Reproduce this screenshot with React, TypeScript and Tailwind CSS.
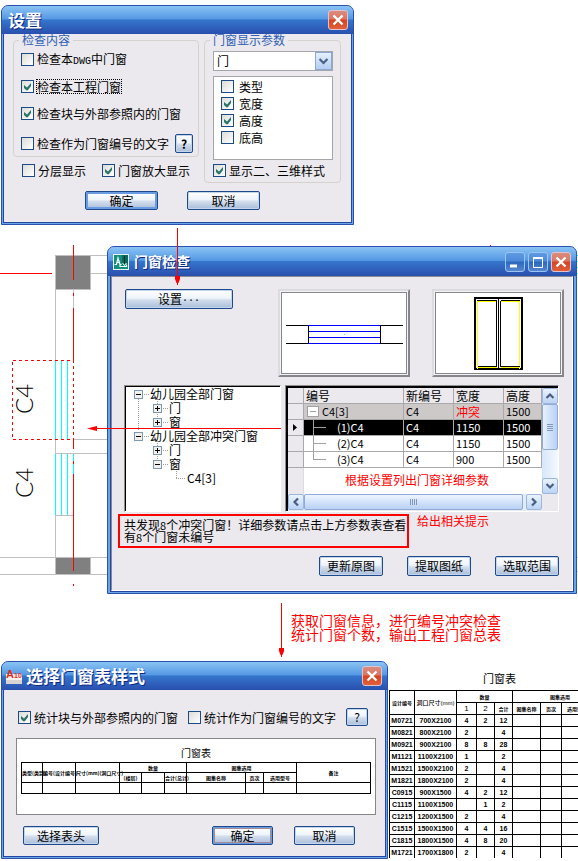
import React from 'react';
import clsx from 'clsx';

type CheckProps = {
  label: React.ReactNode;
  checked?: boolean;
  focused?: boolean;
  gap?: string;
};

function Check({ label, checked = false, focused = false, gap = 'gap-[3px]' }: CheckProps) {
  return (
    <label className={clsx('flex items-center h-[13px] leading-[13px] whitespace-nowrap', gap)}>
      <span className="grid w-[13px] h-[13px] shrink-0">
        <input
          type="checkbox"
          defaultChecked={checked}
          className="peer appearance-none [grid-area:1/1] w-[13px] h-[13px] border border-[#1c4a86] bg-linear-to-br from-[#dcdcd7] to-white"
        />
        <svg viewBox="0 0 13 13" className="[grid-area:1/1] hidden peer-checked:block pointer-events-none" fill="#2b7468">
          <path d="M3 5v3l2 2 1 .5 1-.5 3-4V3L6 7.500z" />
        </svg>
      </span>
      <span className={clsx(focused && 'outline-1 outline-dotted outline-black')}>{label}</span>
    </label>
  );
}

type ButtonProps = { children: React.ReactNode; className?: string; active?: boolean };

function Button({ children, className, active = false }: ButtonProps) {
  return (
    <button
      type="button"
      className={clsx(
        'shrink-0 flex items-center justify-center border rounded-[2px] leading-none text-black whitespace-nowrap',
        'bg-[linear-gradient(#ffffff,#eef4fb_45%,#d3deec_55%,#a9bddb)]',
        active
          ? 'border-[#1d4a8c] shadow-[inset_0_0_0_2px_#6b9be0]'
          : 'border-[#1d4a8c] shadow-[inset_0_0_0_1px_#c4d4ea]',
        className,
      )}
    >
      {children}
    </button>
  );
}

function CaptionButton({ kind }: { kind: 'min' | 'max' | 'close' }) {
  return (
    <button
      type="button"
      aria-label={kind}
      className={clsx(
        'w-5 h-5 shrink-0 rounded-[3px] border grid place-items-center',
        kind === 'close'
          ? 'border-[#e3c3cb] bg-[linear-gradient(#d98c80,#dd7562_45%,#d8421f_50%,#e0603a)]'
          : 'border-[#9cc4f2] bg-[linear-gradient(#5f9be2,#4c88d8_45%,#2c66bc_50%,#5687cf)]',
      )}
    >
      <svg width="14" height="14" viewBox="0 0 14 14" fill="none" stroke="white">
        {kind === 'min' && <path d="M2 11h7" strokeWidth="3" />}
        {kind === 'max' && <path d="M2.500 3v9.500h9V3M2 3.500h10M2 2.500h10" />}
        {kind === 'close' && <path d="M2.500 2.500l9 9M11.500 2.500l-9 9" strokeWidth="2.400" />}
      </svg>
    </button>
  );
}

type DialogProps = {
  title: string;
  icon?: React.ReactNode;
  small?: boolean;
  resizable?: boolean;
  className?: string;
  children: React.ReactNode;
};

function Dialog({ title, icon, small = false, resizable = false, className, children }: DialogProps) {
  return (
    <section className={clsx('rounded-t-[7px] border border-[#2a50b0] bg-[#6aa5e8] overflow-hidden', className)}>
      <header
        className={clsx(
          'flex items-center bg-[linear-gradient(#8ac4f4,#5598e4_46%,#3575cc_50%,#2a4fae)]',
          small ? 'h-[29px] pl-[5px] pr-[5px] gap-[5px]' : 'h-7 pr-[5px] gap-1',
          !small && (icon ? 'pl-1' : 'pl-[6px]'),
        )}
      >
        {icon}
        <h2
          className={clsx(
            'flex-1 font-bold text-white whitespace-nowrap [text-shadow:1px_1px_0_#0f2a80]',
            small ? 'text-[14px]' : 'text-[17px]',
          )}
        >
          {title}
        </h2>
        <div className="flex gap-[3px]">
          {resizable && <CaptionButton kind="min" />}
          {resizable && <CaptionButton kind="max" />}
          <CaptionButton kind="close" />
        </div>
      </header>
      <div className={clsx('pb-px', small ? 'px-[2px]' : 'px-px')}>
        <div className="border-x border-b border-[#2348a4] bg-[#ebe9ed]">{children}</div>
      </div>
    </section>
  );
}

function SettingsDialog() {
  return (
    <Dialog title="设置" className="max-w-[353px]">
      <div className="pl-[9px] pr-[10px] pb-3">
        <div className="grid grid-cols-[186fr_137fr] gap-[5px]">
          <div>
            <fieldset className="border border-[#d3d2cc] rounded-[4px] pl-[7px] pb-[3px]">
              <legend className="px-[3px] -ml-[2px] h-3 leading-3 text-[#2f5fb3]">检查内容</legend>
              <div className="flex flex-col gap-[14px] pt-[7px]">
                <Check label={<>检查本<span className="font-['Liberation_Mono'] text-[10px]">DWG</span>中门窗</>} />
                <Check label="检查本工程门窗" checked focused />
                <Check label="检查块与外部参照内的门窗" checked />
                <div className="flex items-center gap-[6px]">
                  <Check label="检查作为门窗编号的文字" />
                  <Button className="w-[18px] h-[19px] font-bold">?</Button>
                </div>
              </div>
            </fieldset>
            <div className="flex gap-4 pl-[9px] pt-[7px]">
              <Check label="分层显示" />
              <Check label="门窗放大显示" checked />
            </div>
          </div>
          <fieldset className="border border-[#d3d2cc] rounded-[4px] pl-2 pr-[7px]">
            <legend className="px-[3px] -ml-[3px] h-3 leading-3 text-[#2f5fb3]">门窗显示参数</legend>
            <div className="grid mt-[5px]">
              <select
                aria-label="门窗显示参数"
                className="[grid-area:1/1] appearance-none h-5 w-full pl-[3px] leading-[18px] border border-[#a5a5ab] bg-white text-black"
              >
                <option>门</option>
                <option>窗</option>
              </select>
              <span className="[grid-area:1/1] justify-self-end m-px w-[17px] h-[18px] border border-[#8aa8d2] bg-linear-to-b from-[#e6f0fd] to-[#b4cdf1] grid place-items-center pointer-events-none">
                <svg width="9" height="7" viewBox="0 0 9 7" fill="none" stroke="#49608c" strokeWidth="2.200">
                  <path d="M.5 1l4 4 4-4" />
                </svg>
              </span>
            </div>
            <div className="mt-[5px] h-[84px] border border-[#a5a5ab] bg-white flex flex-col gap-1 pl-[7px] pt-[3px]">
              <Check label="类型" gap="gap-[5px]" />
              <Check label="宽度" gap="gap-[5px]" checked />
              <Check label="高度" gap="gap-[5px]" checked />
              <Check label="底高" gap="gap-[5px]" />
            </div>
            <div className="pt-1 pb-[5px]">
              <Check label="显示二、三维样式" checked />
            </div>
          </fieldset>
        </div>
        <div className="flex gap-[29px] pl-[72px] pt-2">
          <Button active className="w-[73px] h-[19px]">确定</Button>
          <Button className="w-[73px] h-[19px]">取消</Button>
        </div>
      </div>
    </Dialog>
  );
}

function FloorPlan() {
  return (
    <svg width="578" height="369" viewBox="0 225 578 369" fill="none" className="absolute left-0 top-0" shapeRendering="crispEdges">
      {/* walls */}
      <path
        stroke="#c0c0c0"
        d="M55.500 290v267M73.500 290v70M90 255.500h20M90 273.500h20M73 439.500h37M55 453.500h55M55 515.500h18M0 557.500h110M0 574.500h110M577 557.500h1M577 571.500h1"
      />
      <rect x="55.500" y="255.500" width="35" height="34" fill="#808080" stroke="#c0c0c0" />
      <rect x="55.500" y="557.500" width="35" height="17" fill="#808080" stroke="#c0c0c0" />
      {/* windows */}
      <path
        stroke="#00ffff"
        d="M55.500 361v78M61.500 361v78M67.500 361v78M55.500 454v61M61.500 454v61M67.500 454v61M73.500 454v20M577 255.500h1M577 261.500h1M577 267.500h1M577 273.500h1"
      />
      {/* axes */}
      <path stroke="#ff0000" d="M0 273.500h52M73.500 245v35M73.500 293v3M73.500 308v52M73.500 440v9M73.500 461v3M73.500 474v97M73.500 584v2M490 245.500h1" />
      <rect x="12.500" y="360.500" width="61" height="79" stroke="#ff0000" strokeDasharray="3 3" />
      <g fill="black" fontFamily="Lato" fontWeight="300" fontSize="24">
        <text transform="translate(33 414) rotate(-90)">C4</text>
        <text transform="translate(33 498) rotate(-90)">C4</text>
      </g>
    </svg>
  );
}

function Preview({ children }: { children: React.ReactNode }) {
  return (
    <div className="w-[132px] h-[88px] border-2 border-t-[#dcdce0] border-l-[#dcdce0] border-r-[#85858c] border-b-[#85858c] bg-[#f4f4f6] p-px">
      <svg viewBox="0 0 126 82" className="w-full h-full bg-white outline-1 -outline-offset-1 outline-[#85858c]" fill="none" shapeRendering="crispEdges">
        {children}
      </svg>
    </div>
  );
}

type TreeRow = { label: string; level: number; open?: boolean };

const treeRows: TreeRow[] = [
  { label: '幼儿园全部门窗', level: 0, open: true },
  { label: '门', level: 1, open: false },
  { label: '窗', level: 1, open: false },
  { label: '幼儿园全部冲突门窗', level: 0, open: true },
  { label: '门', level: 1, open: false },
  { label: '窗', level: 1, open: true },
  { label: 'C4[3]', level: 2 },
];

const treeIndent = ['pl-2', 'pl-[27px]', 'pl-[50px]'];

function Tree() {
  return (
    <div className="w-[157px] h-[127px] shrink-0 border border-t-[#8f8f8f] border-l-[#8f8f8f] border-r-white border-b-white">
      <ul className="h-full relative border-t border-l border-black bg-white">
        <svg width="70" height="100" className="absolute left-0 top-0" fill="none" stroke="#a0a0a0" strokeDasharray="1 1" shapeRendering="crispEdges">
          <path d="M12.500 12v32M31.500 12v6M31.500 27v5M31.500 54v6M31.500 69v5M50.500 82v9M50 91.500h10" />
        </svg>
        {treeRows.map((row, i) => (
          <li key={i} className={clsx('relative flex items-center h-[14px] leading-[14px] whitespace-nowrap', treeIndent[row.level])}>
            {row.open !== undefined && (
              <svg width="16" height="9" viewBox="0 0 16 9" fill="none" shapeRendering="crispEdges">
                <rect x=".5" y=".5" width="8" height="8" rx="1" fill="#f1f0ea" stroke="#7b9ab8" />
                <path d={row.open ? 'M2 4.500h5' : 'M2 4.500h5M4.500 2v5'} stroke="black" />
                <path d="M10 4.500h5" stroke="#a0a0a0" strokeDasharray="1 1" />
              </svg>
            )}
            <span className={clsx(row.level === 2 && 'pl-[11px]')}>{row.label}</span>
          </li>
        ))}
      </ul>
    </div>
  );
}

type DoorRow = { name: string; code: string; width: string; height: string };

const doorRows: DoorRow[] = [
  { name: 'C4[3]', code: 'C4', width: '冲突', height: '1500' },
  { name: '(1)C4', code: 'C4', width: '1150', height: '1500' },
  { name: '(2)C4', code: 'C4', width: '1150', height: '1500' },
  { name: '(3)C4', code: 'C4', width: '900', height: '1500' },
];

const branch = ['M1 2.500h11v10H1zM4 7.500h6', 'M7.500 0v16M7 7.500h13', 'M7.500 0v16M7 7.500h13', 'M7.500 0v8M7 7.500h13'];

const scrollButton = 'w-4 h-4 shrink-0 border border-[#9cb6dc] rounded-[2px] bg-linear-to-b from-[#eaf3fe] to-[#bcd4f5] grid place-items-center';

function ScrollArrow({ label, d }: { label: string; d: string }) {
  return (
    <button type="button" aria-label={label} className={scrollButton}>
      <svg width="10" height="10" viewBox="0 0 10 10" fill="none" stroke="#4a5f80" strokeWidth="2.200">
        <path d={d} />
      </svg>
    </button>
  );
}

function DoorGrid() {
  const cell = 'border-r border-b border-[#a9a9a9] pl-[2px] h-4';
  return (
    <div className="flex-1 min-w-0 border border-t-[#8f8f8f] border-l-[#8f8f8f] border-r-white border-b-white">
      <div className="border-t-2 border-l-2 border-black bg-[#ebe9ed] grid grid-cols-[minmax(0,1fr)_16px] grid-rows-[106px_16px] pb-px">
        <div className="bg-white">
          <table className="table-fixed w-full border-separate border-spacing-0 text-[11px] leading-[15px] whitespace-nowrap">
            <colgroup>
              <col className="w-4" />
              <col />
              <col className="w-[50px]" />
              <col className="w-[50px]" />
              <col className="w-[38px]" />
            </colgroup>
            <thead>
              <tr className="text-left text-[12px] bg-[#ebe9ed]">
                <th className={cell}></th>
                <th className={clsx(cell, 'font-normal')}>编号</th>
                <th className={clsx(cell, 'font-normal')}>新编号</th>
                <th className={clsx(cell, 'font-normal')}>宽度</th>
                <th className={clsx(cell, 'font-normal')}>高度</th>
              </tr>
            </thead>
            <tbody>
              {doorRows.map((row, i) => (
                <tr key={row.name} className={clsx(i === 0 && 'bg-[#cdc9c9]', i === 1 && 'bg-black text-white')}>
                  <td className={clsx(cell, 'bg-[#ebe9ed] pl-[5px]')}>
                    {i === 1 && (
                      <svg width="5" height="7" viewBox="0 0 5 7" fill="black">
                        <path d="M0 0v7l4-3.500z" />
                      </svg>
                    )}
                  </td>
                  <td className={clsx(cell, 'py-0 pl-0')}>
                    <span className="flex">
                      <svg width={i === 0 ? 16 : 31} height="15" fill={i === 0 ? 'white' : 'none'} stroke="#a0a0a0" shapeRendering="crispEdges">
                        <path d={branch[i]} />
                      </svg>
                      {row.name}
                    </span>
                  </td>
                  <td className={cell}>{row.code}</td>
                  <td className={clsx(cell, i === 0 && 'text-[#ff0000] text-[12px]')}>{row.width}</td>
                  <td className={cell}>{row.height}</td>
                </tr>
              ))}
            </tbody>
          </table>
          <div className="flex h-[26px]">
            <div className="w-4 bg-[#ebe9ed] border-r border-[#dcdcdc]" />
            <p className="pl-[41px] pt-[5px] leading-[14px] text-[#ff0000] whitespace-nowrap">根据设置列出门窗详细参数</p>
          </div>
        </div>
        <div className="flex flex-col bg-linear-to-r from-[#d6e6fb] to-[#f4f9ff]">
          <ScrollArrow label="向上" d="M1.500 7L5 3.500 8.500 7" />
          <div className="w-4 h-[46px] border border-[#8fabd6] rounded-[2px] bg-linear-to-r from-[#e8f1fe] to-[#b9d1f4] grid place-items-center">
            <div className="w-[6px] h-[7px] bg-[repeating-linear-gradient(#7f97bd_0_1px,transparent_1px_2px)]" />
          </div>
          <div className="flex-1" />
          <ScrollArrow label="向下" d="M1.500 3L5 6.500 8.500 3" />
        </div>
        <div className="flex bg-[#e3eefc]">
          <ScrollArrow label="向左" d="M7 1.500L3.500 5 7 8.500" />
          <div className="flex-1 mr-[3px] border border-[#8fabd6] rounded-[2px] bg-linear-to-b from-[#eef5ff] to-[#b9d1f4] grid place-items-center">
            <div className="w-[7px] h-[6px] bg-[repeating-linear-gradient(90deg,#7f97bd_0_1px,transparent_1px_2px)]" />
          </div>
          <ScrollArrow label="向右" d="M3 1.500L6.500 5 3 8.500" />
        </div>
        <div />
      </div>
    </div>
  );
}

function CadIcon() {
  return (
    <svg width="16" height="16" viewBox="0 0 16 16" fill="none">
      <rect x=".5" y=".5" width="15" height="15" fill="#15907c" stroke="#e8f4f0" />
      <path d="M9 1h6v10H9z" fill="#0b6a5a" />
      <path d="M1.500 10.500h2L5 4l2 6.500h1.500M3.500 8.500h3M7 10.500v2h6.500v-2" stroke="white" strokeWidth="1.200" />
      <path d="M11.500 2v8" stroke="#06352d" />
      <path d="M9.500 9l2 2.500 2-2.500" stroke="white" />
    </svg>
  );
}

function CheckDialog() {
  return (
    <Dialog title="门窗检查" icon={<CadIcon />} small resizable>
      <div className="border border-t-[#8a8a90] border-l-[#8a8a90] border-r-white border-b-white pt-3 pb-[14px]">
        <div className="flex justify-between pl-[13px] pr-2">
          <Button className="w-[108px] h-5">设置<span className="font-['Liberation_Mono'] text-[10px]">...</span></Button>
          <div className="flex gap-[22px]">
            <Preview>
              <path d="M5 33.500h22M5 51.500h22M27.500 33v19M99.500 33v19M100 33.500h22M100 51.500h22" stroke="black" />
              <path d="M27 33.500h72M28 39.500h71M28 45.500h71M27 51.500h72" stroke="#0000ff" />
              <path d="M63 42.500h1" stroke="#00ffff" />
            </Preview>
            <Preview>
              <rect x="40" y="6" width="47" height="71" stroke="black" strokeWidth="2" />
              <path d="M42.500 9v68M84.500 9v68M42 9.500h20M66 9.500h19M42 75.500h20M66 75.500h19" stroke="#ffff00" />
              <path d="M42 8.500h20M66 8.500h19M43 74.500h19M66 74.500h19M61.500 9v66M63.500 6v71M65.500 9v66" stroke="black" />
            </Preview>
          </div>
        </div>
        <div className="flex gap-1 pl-3 pr-[13px] pt-2">
          <Tree />
          <DoorGrid />
        </div>
        <div className="flex pl-[6px] pt-[2px] gap-2">
          <p className="w-[291px] border-2 border-[#ff0000] pl-1 py-[3px] leading-3 text-black whitespace-nowrap">
            共发现<span className="text-[11px]">8</span>个冲突门窗！详细参数请点击上方参数表查看
            <br />有<span className="text-[11px]">8</span>个门窗未编号
          </p>
          <span className="leading-[14px] text-[#ff0000] whitespace-nowrap">给出相关提示</span>
        </div>
        <div className="flex justify-end gap-6 pr-[13px] pt-2">
          <Button className="w-16 h-5">更新原图</Button>
          <Button className="w-16 h-5">提取图纸</Button>
          <Button className="w-16 h-5">选取范围</Button>
        </div>
      </div>
    </Dialog>
  );
}

function HeaderIcon() {
  return (
    <svg width="16" height="18" viewBox="0 0 16 18">
      <path d="M0 7h16v10H0z" fill="#d9d4d2" />
      <path d="M0 7h16v6H0z" fill="#f6f1ef" />
      <g fill="#d8301c" fontFamily="Liberation Sans" fontWeight="700">
        <text x="0" y="11" fontSize="11">A</text>
        <text x="8" y="11" fontSize="7">10</text>
      </g>
    </svg>
  );
}

function TableStyleDialog() {
  const cell = 'border border-black p-0 text-center';
  return (
    <Dialog title="选择门窗表样式" icon={<HeaderIcon />} className="w-[387px] shrink-0">
      <div className="pl-3 pr-[9px] pt-[18px] pb-[11px]">
        <div className="flex items-center gap-[10px] pl-[2px]">
          <Check label="统计块与外部参照内的门窗" checked />
          <Check label="统计作为门窗编号的文字" />
          <Button className="w-[22px] h-[18px]">?</Button>
        </div>
        <div className="mt-3 h-[77px] border border-[#85858c] bg-white pt-[7px] px-1">
          <h3 className="text-center text-[10px] leading-[14px]">门窗表</h3>
          <table className="mt-[2px] w-full table-fixed border-collapse text-[5px] leading-[6px] font-bold whitespace-nowrap">
            <colgroup>
              <col className="w-[21px]" />
              <col className="w-[33px]" />
              <col className="w-[44px]" />
              <col className="w-[22px]" />
              <col className="w-[23px]" />
              <col className="w-[22px]" />
              <col className="w-[59px]" />
              <col className="w-[18px]" />
              <col className="w-[33px]" />
              <col />
            </colgroup>
            <thead>
              <tr className="h-[10px]">
                <th className={cell} rowSpan={2}>类型(类别)</th>
                <th className={cell} rowSpan={2}>编号(设计编号)</th>
                <th className={cell} rowSpan={2}>尺寸(mm)(洞口尺寸)</th>
                <th className={cell} colSpan={3}>数量</th>
                <th className={cell} colSpan={3}>图集选用</th>
                <th className={cell} rowSpan={2}>备注</th>
              </tr>
              <tr className="h-[10px]">
                <th className={cell}>(楼层)</th>
                <th className={cell}></th>
                <th className={cell}>合计(总计)</th>
                <th className={cell}>图集名称</th>
                <th className={cell}>页次</th>
                <th className={cell}>选用型号</th>
              </tr>
            </thead>
            <tbody>
              <tr className="h-[11px]">
                {Array.from({ length: 10 }, (_, i) => (
                  <td key={i} className={cell}></td>
                ))}
              </tr>
            </tbody>
          </table>
        </div>
        <div className="flex pl-[7px] pr-[21px] pt-[11px]">
          <Button className="w-[76px] h-[19px] mr-auto">选择表头</Button>
          <Button active className="w-[61px] h-[19px] mr-[21px] outline-1 outline-dotted outline-[#e07a4a] -outline-offset-3">确定</Button>
          <Button className="w-[61px] h-[19px]">取消</Button>
        </div>
      </div>
    </Dialog>
  );
}

const schedule = [
  ['M0721', '700X2100', '4', '2', '12'],
  ['M0821', '800X2100', '2', '', '4'],
  ['M0921', '900X2100', '8', '8', '28'],
  ['M1121', '1100X2100', '1', '', '2'],
  ['M1521', '1500X2100', '2', '', '4'],
  ['M1821', '1800X2100', '2', '', '4'],
  ['C0915', '900X1500', '4', '2', '12'],
  ['C1115', '1100X1500', '', '1', '2'],
  ['C1215', '1200X1500', '2', '', '4'],
  ['C1515', '1500X1500', '4', '4', '16'],
  ['C1815', '1800X1500', '4', '8', '20'],
  ['M1721', '1700X1800', '2', '', '4'],
];

function Schedule() {
  const cell = 'border border-black p-0 text-center';
  return (
    <div className="flex-1 min-w-0 h-[197px] overflow-hidden pt-2">
      <h3 className="pl-[94px] text-[11px] leading-[18px]">门窗表</h3>
      <table className="mt-[3px] w-[219px] table-fixed border-collapse font-['Liberation_Sans','Noto_Sans_CJK_SC',sans-serif] text-[7px] leading-[8px] whitespace-nowrap">
        <colgroup>
          <col className="w-[25px]" />
          <col className="w-[42px]" />
          <col className="w-5" />
          <col className="w-[18px]" />
          <col className="w-[18px]" />
          <col className="w-7" />
          <col className="w-[21px]" />
          <col />
        </colgroup>
        <thead>
          <tr className="h-3">
            <th className={clsx(cell, 'text-[5px]')} rowSpan={2}>设计编号</th>
            <th className={clsx(cell, 'text-[6px] font-medium')} rowSpan={2}>洞口尺寸(mm)</th>
            <th className={clsx(cell, 'text-[5px]')} colSpan={3}>数量</th>
            <th className={clsx(cell, 'text-[5px]')} colSpan={3}>图集选用</th>
          </tr>
          <tr className="h-3">
            <th className={clsx(cell, 'font-normal text-[8px]')}>1</th>
            <th className={clsx(cell, 'font-normal text-[8px]')}>2</th>
            <th className={clsx(cell, 'text-[5px]')}>合计</th>
            <th className={clsx(cell, 'text-[5px]')}>图集名称</th>
            <th className={clsx(cell, 'text-[5px]')}>页次</th>
            <th className={clsx(cell, 'text-[5px] text-left pl-[5px]')}>选用型号</th>
          </tr>
        </thead>
        <tbody>
          {schedule.map((row) => (
            <tr key={row[0]} className="h-3 font-bold">
              {row.map((value, i) => (
                <td key={i} className={cell}>{value}</td>
              ))}
              <td className={cell}></td>
              <td className={cell}></td>
              <td className={cell}></td>
            </tr>
          ))}
        </tbody>
      </table>
    </div>
  );
}

export default function App() {
  return (
    <main className="overflow-hidden bg-white pt-[5px] pb-[2px] text-black text-[12px] font-['Noto_Sans_CJK_SC',sans-serif]">
      <div className="pl-px">
        <SettingsDialog />
      </div>

      <div className="relative pt-[21px] pl-[107px] pr-px">
        <FloorPlan />
        <div className="relative">
          <CheckDialog />
        </div>
        <svg width="7" height="57" viewBox="0 0 7 57" fill="#ff0000" className="absolute left-[174px] top-[3px]">
          <path d="M3 0h1v57H3zM1 48h5v3L4.500 55h-2L1 51z" />
        </svg>
        <svg width="194" height="7" viewBox="0 0 194 7" fill="#ff0000" className="absolute left-[87px] top-[200px]">
          <path d="M5 3h189v1H5zM0 3.500L10 1v5z" />
        </svg>
      </div>

      <div className="flex gap-[6px] pl-[278px] pt-[9px] pb-1">
        <svg width="7" height="54" viewBox="0 0 7 54" fill="#ff0000" className="shrink-0">
          <path d="M3 0h1v54H3zM1 45h5v3L4.500 52h-2L1 48z" />
        </svg>
        <p className="pt-[10px] text-[14px] leading-[14px] text-[#ff0000] whitespace-nowrap">
          获取门窗信息，进行编号冲突检查
          <br />统计门窗个数，输出工程门窗总表
        </p>
      </div>

      <div className="flex pl-px gap-px">
        <TableStyleDialog />
        <Schedule />
      </div>
    </main>
  );
}
